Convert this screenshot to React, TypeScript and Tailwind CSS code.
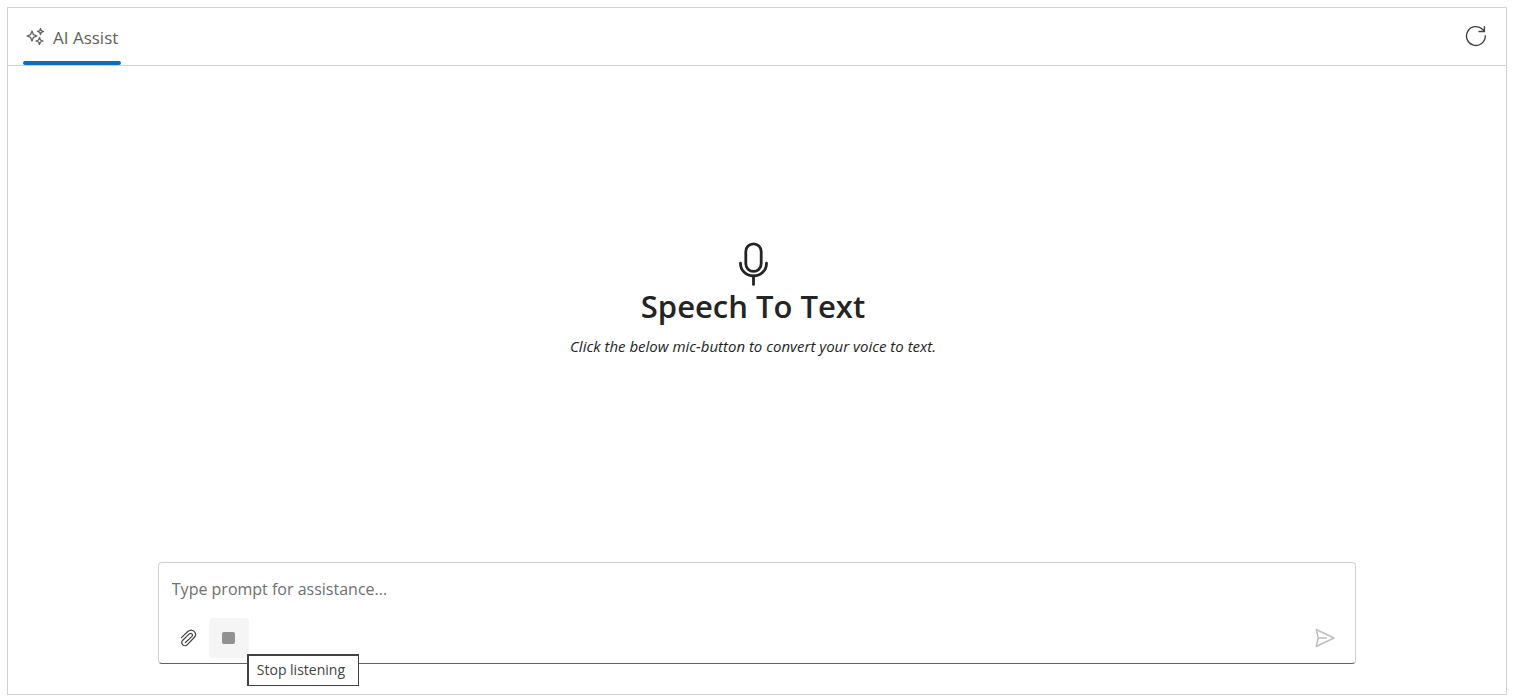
import { useState } from 'react';

// ─── Page ─────────────────────────────────────────────────────────────────────

export default function App() {
  const [prompt, setPrompt] = useState('');

  return (
    <div className="flex min-h-screen flex-col bg-white pt-[7px] pr-2 pb-[3px] pl-[7px] font-['Open_Sans','Noto_Sans',sans-serif] text-[#242424]">
      <div className="flex flex-1 flex-col border border-[#d1d1d1]">
        {/* Header */}
        <header className="flex h-[58px] items-stretch justify-between border-b border-[#d1d1d1] pr-[10px] pl-[15px]">
          <button
            type="button"
            className="flex flex-col justify-between text-[#616161]"
          >
            <span className="flex items-center gap-2 px-[3px] pt-4 text-[17px] leading-7">
              <SparkleIcon />
              AI Assist
            </span>
            <span className="h-1 w-full rounded-full bg-[#0f6cbd]" />
          </button>
          <button
            type="button"
            aria-label="Refresh"
            className="mt-2 flex h-10 w-10 items-center justify-center text-[#424242]"
          >
            <RefreshIcon />
          </button>
        </header>

        {/* Banner */}
        <main className="flex flex-1 flex-col items-center justify-center pr-2 pb-7 text-center">
          <MicIcon />
          <h1 className="text-[31px] leading-10 font-semibold">Speech To Text</h1>
          <p className="mt-2 text-[15px] leading-6 italic">
            Click the below mic-button to convert your voice to text.
          </p>
        </main>

        {/* Prompt box */}
        <form
          onSubmit={(e) => e.preventDefault()}
          className="mx-auto mb-[30px] w-4/5 rounded border border-[#d1d1d1] border-b-[#616161] px-[10px] pb-[5px]"
        >
          <input
            type="text"
            aria-label="Prompt"
            value={prompt}
            onChange={(e) => setPrompt(e.target.value)}
            placeholder="Type prompt for assistance..."
            className="mb-1 block h-[51px] w-full px-[3px] text-base placeholder-[#707070] outline-none"
          />
          <div className="flex h-10 items-center">
            <button
              type="button"
              aria-label="Attach file"
              className="flex h-10 w-10 items-center justify-center text-[#424242]"
            >
              <ClipIcon />
            </button>
            <div className="relative">
              <button
                type="button"
                aria-describedby="stop-tip"
                aria-label="Stop"
                className="flex h-10 w-10 items-center justify-center rounded bg-[#f5f5f5]"
              >
                <span className="h-3 w-[13px] rounded-[2px] bg-[#919191]" />
              </button>
              <div
                id="stop-tip"
                role="tooltip"
                className="absolute top-9 left-[38px] h-8 w-28 border-t-2 border-r border-b border-l-2 border-[#424242] bg-white px-2 text-sm leading-7 whitespace-nowrap text-[#424242]"
              >
                Stop listening
              </div>
            </div>
            <button
              type="submit"
              aria-label="Send"
              className="ml-auto flex h-10 w-10 items-center justify-center text-[#bdbdbd]"
            >
              <SendIcon />
            </button>
          </div>
        </form>
      </div>
    </div>
  );
}

// ─── Icons ────────────────────────────────────────────────────────────────────

function SparkleIcon() {
  return (
    <svg width="19" height="22" viewBox="0 0 19 22" fill="none" stroke="currentColor" strokeWidth="1.3" strokeLinejoin="round" aria-hidden="true">
      <path d="M6 4 7.4 7.6 11 9 7.4 10.4 6 14 4.6 10.4 1 9 4.6 7.6Z" />
      <path d="M14.5 1.5 15.3 3.7 17.5 4.5 15.3 5.3 14.5 7.5 13.7 5.3 11.5 4.5 13.7 3.7Z" />
      <path d="M13.5 10.5 14.5 13 17 14 14.5 15 13.5 17.5 12.5 15 10 14 12.5 13Z" />
    </svg>
  );
}

function RefreshIcon() {
  return (
    <svg width="22" height="22" viewBox="0 0 22 22" fill="none" stroke="currentColor" strokeWidth="1.4" strokeLinecap="round" aria-hidden="true">
      <path d="M20.3 11A9.4 9.4 0 1 1 17.5 4.3L19.2 6.2" />
      <path d="M19.4 1.6V6.5H14" />
    </svg>
  );
}

function MicIcon() {
  return (
    <svg width="30" height="44" viewBox="0 0 30 44" fill="none" stroke="currentColor" strokeWidth="2.8" strokeLinecap="round" aria-hidden="true">
      <rect x="7.8" y="1.8" width="15.4" height="27.6" rx="7.7" />
      <path d="M2.5 21.2C2.5 28.5 8.2 34 15.5 34S28.5 28.5 28.5 21.2" />
      <path d="M15.5 34V42.4" />
    </svg>
  );
}

function ClipIcon() {
  return (
    <svg width="18" height="18" viewBox="0 0 18 18" fill="none" stroke="currentColor" strokeWidth="1.2" strokeLinecap="round" strokeLinejoin="round" aria-hidden="true">
      <path d="M1.4 8.6 7.8 2.5C9.8 .8 12.4 .8 14.2 2.4C15.9 4.2 15.8 6.8 14.2 8.5L7.4 15.6C6.1 16.9 4 17 2.8 15.8C1.5 14.5 1.6 12.5 2.8 11.2L9.3 4.9C10.1 4.2 11.2 4.2 11.9 4.9C12.6 5.6 12.5 6.8 11.8 7.6L5.4 13.5" />
    </svg>
  );
}

function SendIcon() {
  return (
    <svg width="20" height="20" viewBox="0 0 20 20" fill="none" stroke="currentColor" strokeWidth="1.4" strokeLinejoin="round" aria-hidden="true">
      <path d="M1.2 1.5 19 10 1.2 18.5 3.2 10ZM3.2 10H12" />
    </svg>
  );
}
